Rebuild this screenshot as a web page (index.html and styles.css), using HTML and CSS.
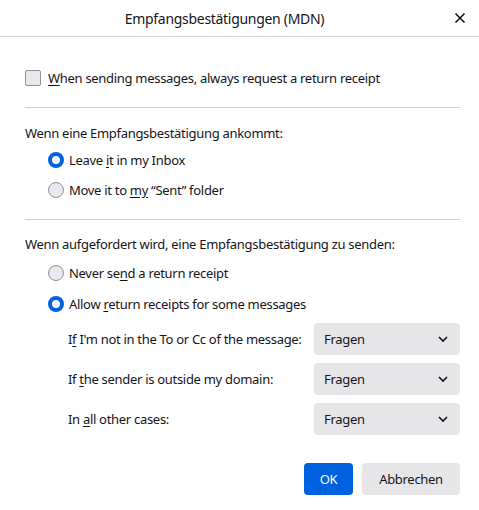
FILE: index.html
```html
<!DOCTYPE html>
<html>
<head>
    <meta charset="UTF-8">
    <link rel="stylesheet" href="styles.css">
</head>
<body>
    <div class="dialog">
        <div class="titlebar">
            <span class="title">Empfangsbestätigungen (MDN)</span>
            <span class="close-btn">
                <svg width="12" height="12" viewBox="0 0 12 12"><path d="M1.5 1.5 L10.5 10.5 M10.5 1.5 L1.5 10.5" stroke="#15141a" stroke-width="1.6" fill="none"/></svg>
            </span>
        </div>

        <div class="content">
            <label class="check-row">
                <span class="checkbox"></span>
                <span><u>W</u>hen sending messages, always request a return receipt</span>
            </label>
            <hr>

            <div class="section-title">Wenn eine Empfangsbestätigung ankommt:</div>
            <div class="radio-list">
                <label class="radio-row"><span class="radio checked"></span><span>Leave <u>i</u>t in my Inbox</span></label>
                <label class="radio-row"><span class="radio"></span><span>Move it to <u>my</u> “Sent” folder</span></label>
            </div>
            <hr>

            <div class="section-title second">Wenn aufgefordert wird, eine Empfangsbestätigung zu senden:</div>
            <div class="radio-list second">
                <label class="radio-row"><span class="radio"></span><span>Never se<u>n</u>d a return receipt</span></label>
                <label class="radio-row"><span class="radio checked"></span><span>Allow <u>r</u>eturn receipts for some messages</span></label>
            </div>

            <div class="rules">
                <span class="rule-label">I<u>f</u> I'm not in the To or Cc of the message:</span>
                <div class="select"><span>Fragen</span><svg width="10" height="6" viewBox="0 0 10 6"><path d="M1 1 L5 5 L9 1" stroke="#15141a" stroke-width="1.7" fill="none"/></svg></div>
                <span class="rule-label">If <u>t</u>he sender is outside my domain:</span>
                <div class="select"><span>Fragen</span><svg width="10" height="6" viewBox="0 0 10 6"><path d="M1 1 L5 5 L9 1" stroke="#15141a" stroke-width="1.7" fill="none"/></svg></div>
                <span class="rule-label">In <u>a</u>ll other cases:</span>
                <div class="select"><span>Fragen</span><svg width="10" height="6" viewBox="0 0 10 6"><path d="M1 1 L5 5 L9 1" stroke="#15141a" stroke-width="1.7" fill="none"/></svg></div>
            </div>

            <div class="buttons">
                <button class="btn primary">OK</button>
                <button class="btn">Abbrechen</button>
            </div>
        </div>
    </div>
</body>
</html>
```

FILE: styles.css
```css
body {
    margin: 0;
    background: #fff;
    color: #15141a;
    font-family: "Noto Sans", "Open Sans", Arial, sans-serif;
    font-size: 13px;
    letter-spacing: -0.3px;
}

.dialog {
    width: 479px;
    height: 510px;
    display: flex;
    flex-direction: column;
}

.titlebar {
    height: 36px;
    border-bottom: 1px solid #d4d4d8;
    display: flex;
    align-items: center;
    justify-content: center;
    padding-right: 30px;
    position: relative;
}

.title {
    font-size: 14px;
}

.close-btn {
    position: absolute;
    right: 13px;
    top: 12px;
    line-height: 0;
}

.content {
    padding: 26px 19px 0 25px;
    display: flex;
    flex-direction: column;
}

u {
    text-underline-offset: 2px;
}

label {
    display: flex;
    align-items: center;
    white-space: nowrap;
}

.check-row {
    height: 30px;
    gap: 7px;
}

.checkbox {
    width: 14px;
    height: 14px;
    border: 1px solid #8f8f9d;
    border-radius: 2px;
    background: #e9e9ed;
}

hr {
    width: 100%;
    margin: 14px 0 0 0;
    border: none;
    border-top: 1px solid #cfcfd8;
}

.section-title {
    height: 24px;
    line-height: 24px;
    margin-top: 13px;
}

.section-title.second {
    margin-top: 12px;
}

.radio-list {
    display: flex;
    flex-direction: column;
    padding-left: 23px;
}

.radio-list.second {
    margin-top: 2px;
    gap: 1px;
}

.radio-row {
    height: 30px;
    gap: 5px;
}

.radio {
    width: 14px;
    height: 14px;
    border: 1px solid #8f8f9d;
    border-radius: 50%;
    background: #e9e9ed;
}

.radio.checked {
    width: 8px;
    height: 8px;
    border: 4px solid #0061e0;
    background: #fff;
}

.rules {
    display: grid;
    grid-template-columns: 246px 146px;
    row-gap: 8px;
    align-items: center;
    padding-left: 43px;
    margin-top: 4px;
}

.rule-label {
    white-space: nowrap;
}

.select {
    height: 32px;
    background: #e6e6e9;
    border-radius: 4px;
    display: flex;
    align-items: center;
    justify-content: space-between;
    padding: 0 12px 0 10px;
}

.buttons {
    display: flex;
    justify-content: flex-end;
    gap: 9px;
    margin-top: 28px;
}

.btn {
    height: 32px;
    border: none;
    border-radius: 4px;
    background: #e6e6e9;
    color: #15141a;
    font-family: inherit;
    font-size: 13px;
    letter-spacing: -0.3px;
    padding: 0 15px;
    min-width: 98px;
}

.btn.primary {
    min-width: 49px;
    background: #0061e0;
    color: #fff;
}
```
